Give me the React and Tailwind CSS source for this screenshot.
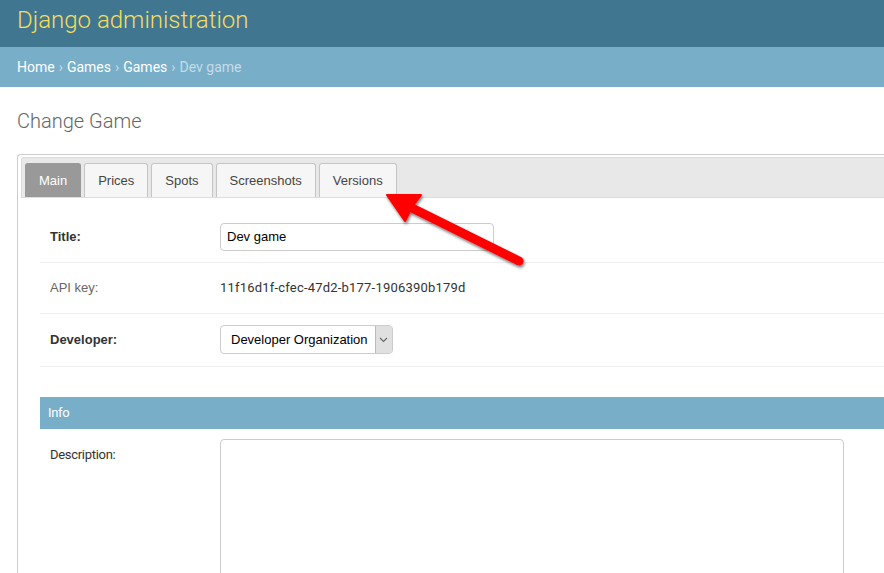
import React from 'react';

const tabs = ['Main', 'Prices', 'Spots', 'Screenshots', 'Versions'];

function Arrow() {
  // red annotation arrow pointing at the Versions tab
  return (
    <svg className="absolute left-0 top-0 pointer-events-none" width="884" height="573">
      <defs>
        <filter id="shadow" x="-20%" y="-20%" width="140%" height="140%">
          <feDropShadow dx="1" dy="2" stdDeviation="1.5" floodColor="#000" floodOpacity="0.55" />
        </filter>
      </defs>
      <g filter="url(#shadow)" fill="#ff0000" stroke="#ff0000">
        <line x1="410" y1="207" x2="519" y2="261" strokeWidth="9" strokeLinecap="round" />
        <polygon points="387,195 405,221 412,207 421,195" strokeWidth="2" strokeLinejoin="round" />
      </g>
    </svg>
  );
}

function Row({ label, bold, muted, children, h = 'h-[51px]' }) {
  return (
    <div className={`flex items-center border-b border-[#eee] pl-[10px] ${h}`}>
      <div
        className={`w-[170px] shrink-0 text-[13px] ${bold ? 'font-bold text-[#333]' : ''} ${muted ? 'text-[#666]' : ''}`}
      >
        {label}
      </div>
      {children}
    </div>
  );
}

export default function App() {
  return (
    <div className="relative w-[884px] h-[573px] overflow-hidden bg-white font-['Liberation_Sans',Arial,sans-serif]">
      <div className="h-[47px] bg-[#417690] pl-[17px] pt-[2px]">
        <span className="font-['Roboto',sans-serif] font-light text-[24px] text-[#f5dd5d]">Django administration</span>
      </div>
      <div className="h-[40px] bg-[#79aec8] pl-[17px] flex items-center font-['Roboto',sans-serif] text-[14px] text-white">
        Home <span className="mx-[4px] text-[#c4dce8]">›</span> Games{' '}
        <span className="mx-[4px] text-[#c4dce8]">›</span> Games{' '}
        <span className="mx-[4px] text-[#c4dce8]">›</span>{' '}
        <span className="text-[#c4dce8]">Dev game</span>
      </div>

      <h1 className="mt-[21px] ml-[17px] font-['Roboto',sans-serif] font-light text-[20px] text-[#666] leading-[26px]">
        Change Game
      </h1>

      <div className="mt-[20px] ml-[17px] w-[900px] h-[500px] border-l border-t border-[#ccc] rounded-tl-[4px] pt-[2px] pl-[3px]">
        <div className="flex items-end gap-[3px] h-[41px] bg-[#e8e8e8] border-l border-t border-b border-[#ddd] rounded-tl-[3px] pl-[3px]">
          {tabs.map((t, i) => (
            <div
              key={t}
              className={`h-[34px] px-[13px] flex items-center rounded-t-[3px] text-[13px] border border-b-0 ${
                i === 0
                  ? 'bg-[#999] border-[#999] text-white'
                  : 'bg-[#f6f6f6] border-[#c5c5c5] text-[#454545]'
              }`}
            >
              {t}
            </div>
          ))}
        </div>

        <div className="pl-[19px] pt-[14px]">
          <Row label="Title:" bold>
            <div className="w-[274px] h-[28px] -mt-[1px] border border-[#ccc] rounded-[4px] px-[6px] flex items-center text-[13px] text-black">
              Dev game
            </div>
          </Row>
          <Row label="API key:" muted>
            <span className="font-['Roboto',sans-serif] text-[13px] text-[#333] tracking-[0.2px]">
              11f16d1f-cfec-47d2-b177-1906390b179d
            </span>
          </Row>
          <Row label="Developer:" bold h="h-[53px]">
            <div className="flex h-[29px] -mt-[1px] border border-[#ccc] rounded-[4px] text-[13px] text-black">
              <div className="flex items-center pl-[10px] pr-[7px]">Developer Organization</div>
              <div className="w-[17px] flex items-center justify-center bg-[#e0e0e0] border-l border-[#bbb] rounded-r-[3px]">
                <svg width="9" height="6" viewBox="0 0 9 6">
                  <path d="M1 1 L4.5 4.5 L8 1" fill="none" stroke="#666" strokeWidth="1.1" />
                </svg>
              </div>
            </div>
          </Row>

          <div className="mt-[30px] h-[32px] bg-[#79aec8] pl-[8px] flex items-center text-[13px] text-white font-['Roboto',sans-serif] tracking-[-0.3px]">
            Info
          </div>
          <div className="flex pl-[10px] pt-[10px]">
            <div className="w-[170px] shrink-0 pt-[6px] text-[13px] text-[#333] font-['Roboto',sans-serif] tracking-[-0.3px]">
              Description:
            </div>
            <div className="w-[624px] h-[160px] border border-[#ccc] rounded-[4px]" />
          </div>
        </div>
      </div>

      <Arrow />
    </div>
  );
}
